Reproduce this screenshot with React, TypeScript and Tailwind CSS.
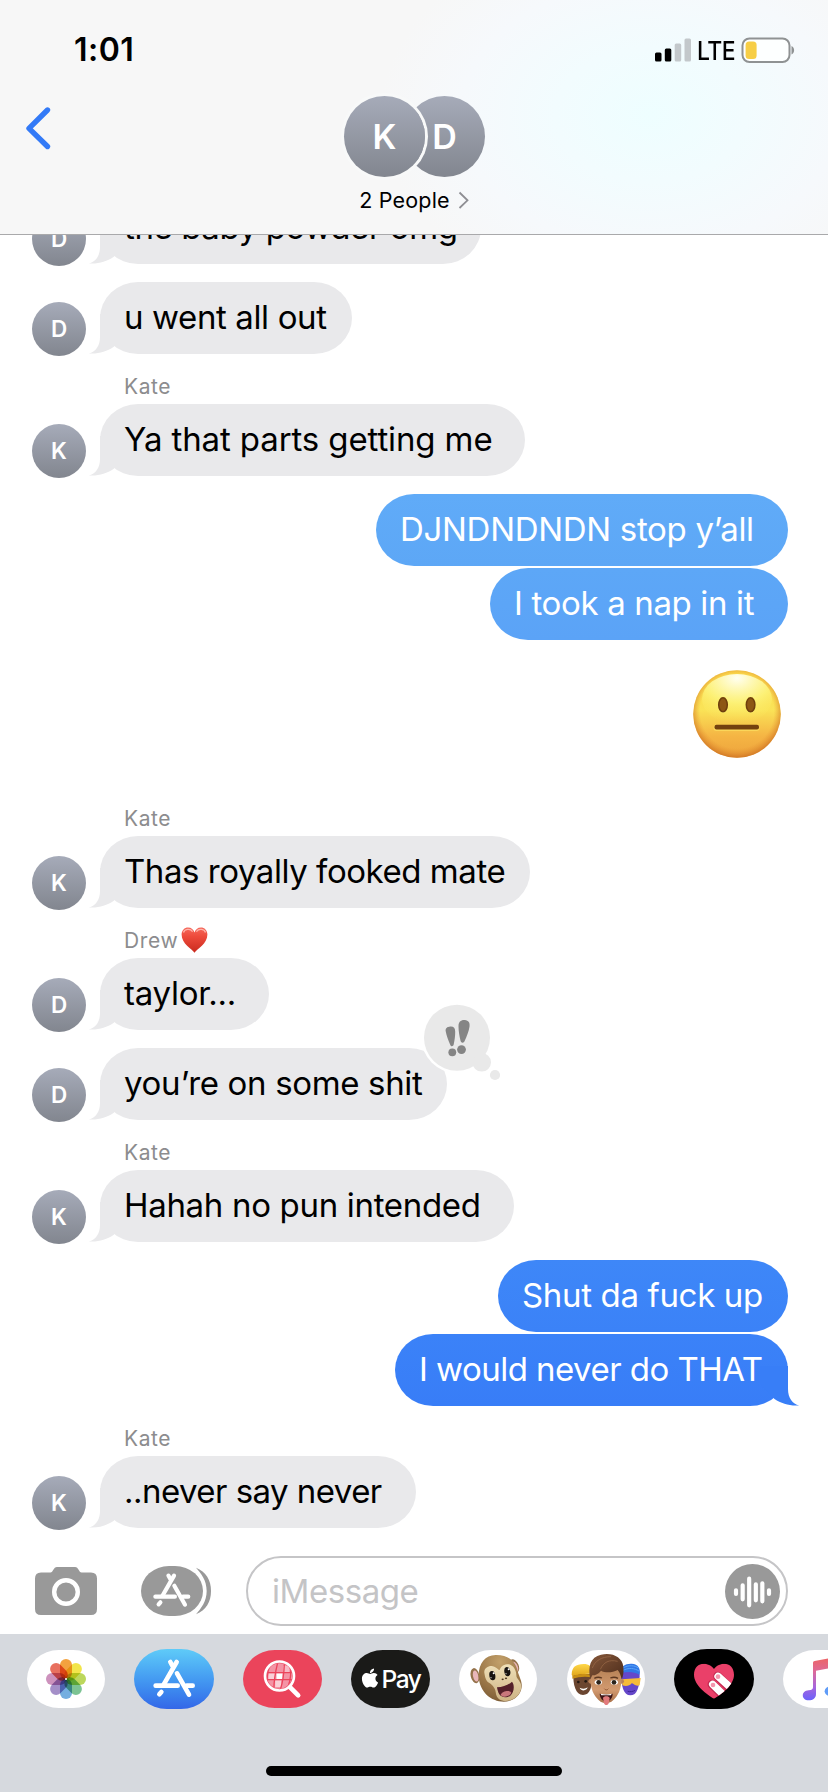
import type { ReactNode } from "react";
import { FaApple } from "react-icons/fa";

type Tail = "left" | "right";

function BubbleTail({ side, color }: { side: Tail; color: string }) {
  return (
    <svg
      className={
        side === "left"
          ? "absolute bottom-0 -left-[12px] h-[44px] w-[40px]"
          : "absolute -right-[12px] bottom-0 h-[44px] w-[40px] -scale-x-100"
      }
      viewBox="0 0 40 44"
      fill={color}
    >
      <path d="M12 4V27C12 36 7.5 42 0.8 43.4C9.5 44.4 18.5 41.5 25.5 37L40 22V4Z" />
    </svg>
  );
}

function Avatar({ letter }: { letter: string }) {
  return (
    <div className="ml-8 mb-[-2px] flex size-[54px] shrink-0 items-center justify-center rounded-full bg-linear-to-b from-[#a6abb9] to-[#82868f] text-[22.5px] leading-none font-semibold text-white">
      {letter}
    </div>
  );
}

function Label({ name, heart }: { name: string; heart?: boolean }) {
  return (
    <div className="flex h-[50px] items-start pt-5 pl-[124px]">
      <span className="text-[21px] leading-[25px] tracking-[0.6px] text-[#8c8c8e]">{name}</span>
      {heart && (
        <svg className="-mt-[1px] ml-[3px] h-[26px] w-[27px]" viewBox="0 0 27 26">
          <defs>
            <linearGradient id="heart" x1="0" y1="0" x2="0" y2="1">
              <stop offset="0" stopColor="#f5695c" />
              <stop offset="0.35" stopColor="#ee4b3c" />
              <stop offset="1" stopColor="#c92a1e" />
            </linearGradient>
          </defs>
          <path
            d="M13.5 25.8C11 22 0.6 17 0.6 7.6C0.6 3.2 3.6 0.5 7 0.5C10.4 0.5 12.6 2.6 13.5 5.4C14.4 2.6 16.6 0.5 20 0.5C23.4 0.5 26.4 3.2 26.4 7.6C26.4 17 16 22 13.5 25.8Z"
            fill="url(#heart)"
          />
          <path d="M2.5 5.5C3.4 2.2 9 1 11.6 4.6" stroke="#ffb3a9" strokeWidth="1.3" fill="none" />
          <path d="M15.4 4.6C18 1 23.6 2.2 24.5 5.5" stroke="#ffb3a9" strokeWidth="1.3" fill="none" />
        </svg>
      )}
    </div>
  );
}

function Incoming({
  letter,
  className,
  children,
  badge,
}: {
  letter: string;
  className: string;
  children: ReactNode;
  badge?: ReactNode;
}) {
  return (
    <div className="flex h-[72px] items-end">
      <Avatar letter={letter} />
      <div
        className={`relative ml-[14px] h-[72px] pl-6 text-[33px] leading-[70px] whitespace-nowrap text-black bg-[#e9e9eb] [border-radius:38px/36px] ${className}`}
      >
        <BubbleTail side="left" color="#e9e9eb" />
        <span className="relative">{children}</span>
        {badge}
      </div>
    </div>
  );
}

function Outgoing({ className, tail, children }: { className: string; tail?: boolean; children: ReactNode }) {
  return (
    <div className="flex h-[72px] justify-end pr-10">
      <div
        className={`relative h-[72px] pl-6 text-[33px] leading-[70px] font-normal whitespace-nowrap text-white [border-radius:38px/36px] ${className}`}
      >
        {tail && <BubbleTail side="right" color="#387ef7" />}
        <span className="relative">{children}</span>
      </div>
    </div>
  );
}

function Emphasis() {
  return (
    <svg className="absolute -top-[48px] left-[320px] h-[84px] w-[84px]" viewBox="0 0 84 84">
      <circle cx="37" cy="37.7" r="35.6" fill="#fff" />
      <circle cx="37" cy="37.7" r="33" fill="#e9e9e9" />
      <circle cx="61.7" cy="62.3" r="9.3" fill="#e9e9e9" />
      <circle cx="75" cy="75" r="5.1" fill="#e9e9e9" />
      <g fill="#858585">
        <path d="M30.3 26.6C33.5 26.3 35.2 28.2 35.2 31.5C35.3 36 34.6 40 33.7 44.6C33.2 46.7 31 46.8 30.3 44.9C28.4 40.5 26.4 35.5 25.7 31.3C25.3 28.6 27 26.8 30.3 26.6Z" />
        <path d="M44.8 20.1C48.5 20.5 50.2 22.7 49.5 26.7C48.7 31.5 46.7 36.5 44.5 41.2C43.5 43.3 41.2 43.1 40.6 41C39.5 36 38.5 31.5 38.5 26.4C38.5 22 40.8 19.8 44.8 20.1Z" />
        <circle cx="32.3" cy="52.3" r="3.9" />
        <circle cx="41.5" cy="49.6" r="4.4" />
      </g>
    </svg>
  );
}

function NeutralFace() {
  return (
    <svg className="size-[88px]" viewBox="0 0 88 88">
      <defs>
        <linearGradient id="face" x1="0" y1="0" x2="0" y2="1">
          <stop offset="0" stopColor="#fbd94c" />
          <stop offset="0.45" stopColor="#fae357" />
          <stop offset="0.75" stopColor="#f5b544" />
          <stop offset="1" stopColor="#eda33c" />
        </linearGradient>
        <radialGradient id="rim" cx="0.5" cy="0.47" r="0.54">
          <stop offset="0.78" stopColor="#e58e2e" stopOpacity="0" />
          <stop offset="1" stopColor="#c86a1e" stopOpacity="0.85" />
        </radialGradient>
        <radialGradient id="shine" cx="0.5" cy="0.08" r="0.9">
          <stop offset="0" stopColor="#fffff2" />
          <stop offset="0.55" stopColor="#fdf47c" stopOpacity="0.85" />
          <stop offset="1" stopColor="#fbe65a" stopOpacity="0" />
        </radialGradient>
      </defs>
      <circle cx="44" cy="44" r="43.8" fill="url(#face)" />
      <circle cx="44" cy="44" r="43.8" fill="url(#rim)" />
      <ellipse cx="44" cy="29" rx="35" ry="25" fill="url(#shine)" />
      <ellipse cx="30" cy="35" rx="5.5" ry="8.3" fill="#fdf06c" />
      <ellipse cx="57.6" cy="35" rx="5.5" ry="8.3" fill="#fdf06c" />
      <ellipse cx="30" cy="34.8" rx="4.3" ry="7" fill="#8d5714" stroke="#6f3f0d" strokeWidth="1.5" />
      <ellipse cx="57.6" cy="34.8" rx="4.3" ry="7" fill="#8d5714" stroke="#6f3f0d" strokeWidth="1.5" />
      <rect x="20.5" y="55" width="46" height="6" rx="3" fill="#fbd65a" />
      <rect x="21.5" y="54.8" width="44.5" height="4.8" rx="2" fill="#74410f" />
    </svg>
  );
}

function StoreGlyph() {
  return (
    <g fill="none" stroke="#fff" strokeWidth="14" strokeLinecap="round">
      <path d="M530 366L491 434" />
      <path d="M511 366L517 377" />
      <path d="M467 437H533" />
      <path d="M560 437H578" />
      <path d="M531 400L567 464" />
      <path d="M484 456L478 463" />
    </g>
  );
}

const petals = [
  { angle: 0, color: "#f3a23f" },
  { angle: 45, color: "#f2e54b" },
  { angle: 90, color: "#bcd75c" },
  { angle: 135, color: "#7cc393" },
  { angle: 180, color: "#74aee0" },
  { angle: 225, color: "#a48fc8" },
  { angle: 270, color: "#cd92bd" },
  { angle: 315, color: "#e8705f" },
];

function Pill({ className, children }: { className: string; children: ReactNode }) {
  return (
    <div className="flex w-[108px] shrink-0 items-center justify-center">
      <div className={`flex items-center justify-center overflow-hidden [border-radius:33px/30px] ${className}`}>
        {children}
      </div>
    </div>
  );
}

function PhotosIcon() {
  return (
    <svg className="isolate size-full" viewBox="81 330 234 174">
      {petals.map((p) => (
        <rect
          key={p.angle}
          className="mix-blend-multiply"
          x="180"
          y="357"
          width="36"
          height="60"
          rx="18"
          fill={p.color}
          transform={`rotate(${p.angle} 198 417)`}
        />
      ))}
      <circle cx="198" cy="417" r="3" fill="#fff" />
    </svg>
  );
}

function SearchIcon() {
  return (
    <svg className="size-full" viewBox="729 330 234 174">
      <defs>
        <clipPath id="globe">
          <circle cx="837" cy="408" r="38" />
        </clipPath>
      </defs>
      <path d="M869 442L893 466" stroke="#fff" strokeWidth="14" strokeLinecap="round" />
      <g clipPath="url(#globe)">
        <rect x="795" y="366" width="84" height="84" fill="#f494a5" />
        <rect x="828" y="400" width="18" height="17" fill="#fff" />
        <rect x="804" y="400" width="20" height="17" fill="#fad0d7" />
        <rect x="824" y="421" width="18" height="20" fill="#fad0d7" />
        <rect x="848" y="378" width="18" height="18" fill="#f8bbc6" />
        <g stroke="#eb445b" strokeWidth="4" fill="none">
          <path d="M795 398H880M795 419H880" />
          <path d="M832 366C826 390 820 425 820 450" />
          <path d="M852 366C851 390 848 425 839 450" />
          <path d="M812 366C803 385 799 405 800 430" />
          <path d="M870 380C872 400 868 430 858 450" />
        </g>
      </g>
      <circle cx="837" cy="408" r="43.5" fill="none" stroke="#fff" strokeWidth="8" />
    </svg>
  );
}

function MonkeyIcon() {
  return (
    <svg className="size-full" viewBox="12 24 234 174">
      <defs>
        <radialGradient id="fur" cx="0.5" cy="0.15" r="0.9">
          <stop offset="0" stopColor="#c2a06a" />
          <stop offset="0.6" stopColor="#9b7748" />
          <stop offset="1" stopColor="#7a5a34" />
        </radialGradient>
        <linearGradient id="muzzle" x1="0" y1="0" x2="0" y2="1">
          <stop offset="0" stopColor="#efe0b8" />
          <stop offset="1" stopColor="#cdb384" />
        </linearGradient>
      </defs>
      <ellipse cx="60" cy="101" rx="13" ry="23" fill="#94724a" transform="rotate(-12 60 101)" />
      <ellipse cx="62" cy="102" rx="8" ry="17" fill="#e9b6b8" transform="rotate(-12 62 102)" />
      <ellipse cx="178" cy="72" rx="13" ry="21" fill="#94724a" transform="rotate(-24 178 72)" />
      <ellipse cx="180" cy="74" rx="8" ry="16" fill="#e9b6b8" transform="rotate(-24 180 74)" />
      <path
        d="M122 39C160 38 182 58 188 88C194 108 202 120 200 136C196 164 172 179 146 179C108 178 74 150 71 104C70 64 90 40 122 39Z"
        fill="url(#fur)"
      />
      <path
        d="M88 92C86 78 104 68 118 74C126 77 130 84 134 84C137 76 143 68 156 67C174 66 184 84 184 100C184 112 200 118 199 136C197 160 174 177 152 177C138 177 124 172 122 150C121 138 112 128 102 122C92 116 90 104 88 92Z"
        fill="url(#muzzle)"
      />
      <ellipse cx="112" cy="101" rx="9" ry="14" fill="#171310" transform="rotate(-10 112 101)" />
      <ellipse cx="157" cy="89" rx="9" ry="14" fill="#171310" transform="rotate(-10 157 89)" />
      <circle cx="116" cy="94" r="3" fill="#fff" />
      <circle cx="161" cy="82" r="3" fill="#fff" />
      <circle cx="108" cy="107" r="1.8" fill="#ddd" />
      <circle cx="153" cy="95" r="1.8" fill="#ddd" />
      <ellipse cx="143" cy="112" rx="3.5" ry="2.5" fill="#4a341f" />
      <ellipse cx="153" cy="109" rx="3.5" ry="2.5" fill="#4a341f" />
      <path d="M126 136C144 136 162 128 171 119C180 130 177 152 166 161C154 169 138 166 133 157C129 151 127 143 126 136Z" fill="#54202a" />
      <path d="M137 158C141 148 164 142 169 152C164 164 144 169 137 158Z" fill="#c9777c" />
    </svg>
  );
}

function MemojiIcon() {
  return (
    <svg className="size-full" viewBox="336 24 234 174">
      <defs>
        <linearGradient id="skin" x1="0" y1="0" x2="0" y2="1">
          <stop offset="0" stopColor="#b98458" />
          <stop offset="0.6" stopColor="#d29a70" />
          <stop offset="1" stopColor="#a97048" />
        </linearGradient>
        <linearGradient id="hair" x1="0" y1="0" x2="1" y2="1">
          <stop offset="0" stopColor="#86583a" />
          <stop offset="1" stopColor="#4d2c1b" />
        </linearGradient>
        <linearGradient id="cap" x1="0" y1="0" x2="0" y2="1">
          <stop offset="0" stopColor="#ffd84a" />
          <stop offset="1" stopColor="#e0a519" />
        </linearGradient>
      </defs>
      <path d="M355 96C354 130 362 158 384 159C404 158 412 140 412 96Z" fill="#6b4630" />
      <path d="M350 98C350 76 362 66 386 66C402 66 412 72 412 96C392 94 370 98 352 102Z" fill="url(#cap)" />
      <path d="M352 102C372 96 392 95 412 98L412 106C390 102 372 104 352 110Z" fill="#c98f14" />
      <ellipse cx="370" cy="120" rx="4" ry="4" fill="#221812" />
      <ellipse cx="392" cy="118" rx="4" ry="4" fill="#221812" />
      <path d="M374 137C383 142 392 141 398 136C396 147 378 149 374 137Z" fill="#fff" />
      <path d="M498 90C498 134 506 160 526 160C546 160 555 136 554 86Z" fill="#6547c9" />
      <path d="M498 94C496 72 512 64 530 65C550 66 558 80 553 98C536 88 516 88 498 94Z" fill="#3277e6" />
      <path d="M504 78C520 68 540 70 550 78M502 86C520 76 540 78 553 88" stroke="#57a5f8" strokeWidth="3" fill="none" />
      <path d="M500 112L557 108L554 130C540 134 536 124 530 124C524 132 512 134 502 130Z" fill="#f6bb38" />
      <path d="M518 148C526 150 534 149 540 145" stroke="#3b2596" strokeWidth="3" fill="none" />
      <circle cx="407" cy="118" r="7" fill="#bb8258" />
      <circle cx="500" cy="118" r="7" fill="#bb8258" />
      <path d="M408 84C404 120 408 146 422 164C440 190 466 190 484 164C498 146 502 120 498 84Z" fill="url(#skin)" />
      <path
        d="M406 112C398 72 406 46 438 38C470 30 502 44 505 74C507 92 504 104 500 112C497 100 495 92 488 84C470 94 448 92 438 86C430 96 422 100 412 100C410 104 408 108 406 112Z"
        fill="url(#hair)"
      />
      <path d="M412 78C420 56 440 44 468 44M436 82C446 60 462 52 488 58" stroke="#a4714e" strokeWidth="3" fill="none" opacity="0.6" />
      <path d="M418 109C425 105 433 105 441 108M466 108C473 105 482 105 489 109" stroke="#5d3821" strokeWidth="4" fill="none" />
      <ellipse cx="430" cy="121" rx="11" ry="7.5" fill="#fff" />
      <ellipse cx="478" cy="121" rx="11" ry="7.5" fill="#fff" />
      <circle cx="431" cy="121" r="7" fill="#2b231b" />
      <circle cx="477" cy="121" r="7" fill="#2b231b" />
      <path d="M448 140C451 145 457 145 460 140" stroke="#8f5734" strokeWidth="3" fill="none" />
      <path d="M434 155C448 158 460 158 473 155C473 170 463 178 454 178C444 178 435 170 434 155Z" fill="#3c1516" />
      <path d="M437 155.5C448 158 460 158 470 155.5L468 160H439Z" fill="#fff" />
      <path d="M444 168C446 161 462 161 464 168L461 184C459 191 449 191 447 184Z" fill="#e27a7c" />
    </svg>
  );
}

function TouchIcon() {
  return (
    <svg className="size-full" viewBox="18 21 240 180">
      <defs>
        <clipPath id="touch">
          <path d="M138 170C118 158 78 130 78 98C78 76 92 65 107 65C120 65 132 72 138 81C144 72 156 65 169 65C184 65 198 76 198 98C198 130 158 158 138 170Z" />
        </clipPath>
      </defs>
      <g clipPath="url(#touch)">
        <rect x="70" y="55" width="140" height="120" fill="#ea4069" />
        <path d="M132 127L178 172" stroke="#c52b52" strokeWidth="27" strokeLinecap="round" />
        <path d="M149 103L196 148" stroke="#c52b52" strokeWidth="27" strokeLinecap="round" />
        <path d="M134 127L178 170" stroke="#fff" strokeWidth="22" strokeLinecap="round" />
        <path d="M150 103L200 148" stroke="#fff" strokeWidth="22" strokeLinecap="round" />
        <circle cx="135" cy="129" r="7" fill="#f495ad" />
        <circle cx="150" cy="104" r="7" fill="#f495ad" />
      </g>
    </svg>
  );
}

function MusicIcon() {
  return (
    <svg className="size-full" viewBox="345 24 234 174">
      <defs>
        <linearGradient id="note" x1="0" y1="0" x2="0" y2="1">
          <stop offset="0" stopColor="#f0635c" />
          <stop offset="0.35" stopColor="#dd6a98" />
          <stop offset="0.7" stopColor="#a765dc" />
          <stop offset="1" stopColor="#6a62fb" />
        </linearGradient>
      </defs>
      <path
        d="M435 62Q435 58 440 57L524 41Q530 40 530 46V140C530 156 520 163 506 163C490 163 488 136 508 132L516 130Q520 129 520 124V72L444 86V156C444 168 435 175 422 175C398 175 399 146 422 145C431 144 435 142 435 136Z"
        fill="url(#note)"
      />
      <ellipse cx="488" cy="148" rx="18" ry="15" fill="#5f9cf8" />
    </svg>
  );
}

export default function App() {
  return (
    <div className="flex h-[1792px] w-[828px] flex-col overflow-hidden bg-white font-[Inter,'Liberation_Sans',sans-serif]">
      <header className="flex h-[235px] shrink-0 flex-col border-b border-[#a9a9ab] bg-[#f7f7f7] bg-[radial-gradient(ellipse_270px_190px_at_650px_115px,#eefeff_0%,#f2fcfe_35%,#f6f9fc_70%,#f7f7f7_100%)]">
        <div className="flex h-[88px] items-start justify-between pt-[33px] pr-[33px] pl-[74px]">
          <span className="text-[32px] leading-[34px] font-semibold tracking-[0.5px] text-black">1:01</span>
          <div className="flex h-[34px] items-center">
            <svg className="h-[24px] w-[38px]" viewBox="0 0 38 24">
              <rect x="0" y="14.5" width="6.5" height="9" rx="1.5" fill="#000" />
              <rect x="9.8" y="10.5" width="6.5" height="13" rx="1.5" fill="#000" />
              <rect x="19.7" y="5.5" width="6.5" height="18" rx="1.5" fill="#c3c8cb" />
              <rect x="29.5" y="0.5" width="6.5" height="23" rx="1.5" fill="#c3c8cb" />
            </svg>
            <span className="ml-[4px] inline-block w-[41px] origin-left scale-x-[0.9] pt-px text-[25.5px] leading-[34px] font-medium tracking-[-0.6px] text-black">
              LTE
            </span>
            <svg className="ml-[3px] h-[26px] w-[54px]" viewBox="0 0 54 26">
              <rect x="1.5" y="1.500" width="47" height="23.5" rx="7" fill="#fdffff" stroke="#8f9293" strokeWidth="2" />
              <rect x="4.6" y="4.5" width="11" height="17.5" rx="3.5" fill="#f7ce46" />
              <path d="M50.5 9V17.500C54 16 54 10.500 50.500 9Z" fill="#8f9293" />
            </svg>
          </div>
        </div>
        <div className="grid grid-cols-[344px_1fr] pt-2">
          <svg className="mt-[9px] ml-[24px] h-[46px] w-[30px]" viewBox="0 0 30 46" fill="none">
            <path d="M23.5 5L5 23.3L23.5 41.5" stroke="#337af7" strokeWidth="5.4" strokeLinecap="round" strokeLinejoin="round" />
          </svg>
          <div className="flex h-[81px]">
            <div className="z-10 flex size-[81px] shrink-0 items-center justify-center rounded-full bg-linear-to-b from-[#a6abb9] to-[#82868f] text-[34px] font-semibold text-white ring-[3px] ring-[#f8f9f9]">
              K
            </div>
            <div className="-ml-[21px] flex size-[81px] shrink-0 items-center justify-center rounded-full bg-linear-to-b from-[#a6abb9] to-[#82868f] text-[34px] font-semibold text-white">
              D
            </div>
          </div>
        </div>
        <div className="flex items-center justify-center pt-[10px]">
          <span className="text-[21.5px] leading-[26px] tracking-[0.2px] text-black">2 People</span>
          <svg className="ml-2 h-[18px] w-[11px]" viewBox="0 0 11 18" fill="none">
            <path d="M1.5 1.5L9.5 9.3L1.5 17" stroke="#8e8e93" strokeWidth="1.8" />
          </svg>
        </div>
      </header>

      <main className="flex h-[1321px] shrink-0 flex-col overflow-hidden">
        <div className="-mt-[43px] flex flex-col">
          <Incoming letter="D" className="w-[381px] tracking-[-0.4px]">the baby powder omg</Incoming>
          <div className="h-[18px]" />
          <Incoming letter="D" className="w-[252px] tracking-[-0.38px]">u went all out</Incoming>
          <Label name="Kate" />
          <Incoming letter="K" className="w-[425px] tracking-[-0.12px]">Ya that parts getting me</Incoming>
          <div className="mt-[18px] flex flex-col gap-[2px]">
            <Outgoing className="w-[412px] bg-linear-to-b from-[#60abf8] to-[#5da7f6] tracking-[-0.3px]">DJNDNDNDN stop y’all</Outgoing>
            <Outgoing className="w-[298px] bg-linear-to-b from-[#5da7f7] to-[#5ba3f7] tracking-[-0.35px]">I took a nap in it</Outgoing>
          </div>
          <div className="mt-[30px] mb-[28px] flex justify-end pr-[47px]">
            <NeutralFace />
          </div>
          <Label name="Kate" />
          <Incoming letter="K" className="w-[430px] tracking-[-0.45px]">Thas royally fooked mate</Incoming>
          <Label name="Drew" heart />
          <Incoming letter="D" className="w-[169px] tracking-[-0.25px]">taylor...</Incoming>
          <div className="h-[18px]" />
          <Incoming letter="D" className="w-[347px] tracking-[-0.34px]" badge={<Emphasis />}>
            you’re on some shit
          </Incoming>
          <Label name="Kate" />
          <Incoming letter="K" className="w-[414px] tracking-[-0.32px]">Hahah no pun intended</Incoming>
          <div className="mt-[18px] flex flex-col gap-[2px]">
            <Outgoing className="w-[290px] bg-linear-to-b from-[#3e87f8] to-[#3b82f7] tracking-[-0.34px]">Shut da fuck up</Outgoing>
            <Outgoing tail className="w-[393px] bg-linear-to-b from-[#3b82f8] to-[#387df7] tracking-[-0.53px]">I would never do THAT</Outgoing>
          </div>
          <Label name="Kate" />
          <Incoming letter="K" className="w-[316px] tracking-[-0.54px]">..never say never</Incoming>
        </div>
      </main>

      <div className="flex h-[78px] shrink-0 items-start pl-[35px]">
        <svg className="mt-[11px] h-[48px] w-[62px]" viewBox="0 0 62 48">
          <path
            d="M6 5.5H15.5C18 5.5 18.5 0 22 0H40C43.5 0 44 5.5 46.5 5.5H56Q62 5.5 62 11.5V42Q62 48 56 48H6Q0 48 0 42V11.5Q0 5.5 6 5.5Z"
            fill="#999"
          />
          <circle cx="31" cy="25" r="11.8" fill="none" stroke="#fff" strokeWidth="4.4" />
        </svg>
        <svg className="mt-[10px] ml-[44px] h-[50px] w-[70px]" viewBox="423 78 210 150">
          <path d="M588 83C618 95 633 120 633 153C633 186 618 210 588 223C603 205 620 185 620 153C620 120 603 100 588 83Z" fill="#999" />
          <rect x="423" y="78" width="186" height="150" rx="84" ry="75" fill="#999" />
          <g transform="translate(515 170) scale(0.89) translate(-522 -437)">
            <StoreGlyph />
          </g>
        </svg>
        <div className="ml-[35px] flex h-[70px] w-[542px] items-center justify-between rounded-full border-2 border-[#c5c5c7] pr-[6px] pl-[24px]">
          <span className="text-[33px] leading-[64px] tracking-[-0.44px] text-[#c4c4c6]">iMessage</span>
          <svg className="size-[55px]" viewBox="0 0 165 165">
            <circle cx="82.5" cy="82.5" r="82.5" fill="#999" />
            <path
              d="M33 79V90M53 64V106M72.5 44V124M92.5 61V109M112 58V112M132 79V90"
              stroke="#fff"
              strokeWidth="12.5"
              strokeLinecap="round"
            />
          </svg>
        </div>
      </div>

      <footer className="flex h-[158px] shrink-0 flex-col items-center justify-between bg-[#d6d9de] pb-4">
        <div className="flex h-[90px] w-full items-center overflow-hidden pl-3">
          <Pill className="h-[58px] w-[78px] bg-white"><PhotosIcon /></Pill>
          <Pill className="h-[60px] w-[80px] bg-linear-to-b from-[#5fcbf8] to-[#3467e8]">
            <svg className="size-full" viewBox="402 327 240 180"><StoreGlyph /></svg>
          </Pill>
          <Pill className="h-[58px] w-[79px] bg-[#eb445b]"><SearchIcon /></Pill>
          <Pill className="h-[58px] w-[79px] bg-[#1a1a18]">
            <div className="flex items-center text-white">
              <FaApple className="mb-[3px] size-[22px]" />
              <span className="text-[24.5px] leading-[56px] font-medium tracking-[-1.4px]">Pay</span>
            </div>
          </Pill>
          <Pill className="h-[58px] w-[78px] bg-white"><MonkeyIcon /></Pill>
          <Pill className="h-[58px] w-[78px] bg-white"><MemojiIcon /></Pill>
          <Pill className="h-[60px] w-[80px] bg-black"><TouchIcon /></Pill>
          <Pill className="h-[58px] w-[78px] bg-white"><MusicIcon /></Pill>
        </div>
        <div className="h-[10px] w-[296px] rounded-full bg-black" />
      </footer>
    </div>
  );
}
